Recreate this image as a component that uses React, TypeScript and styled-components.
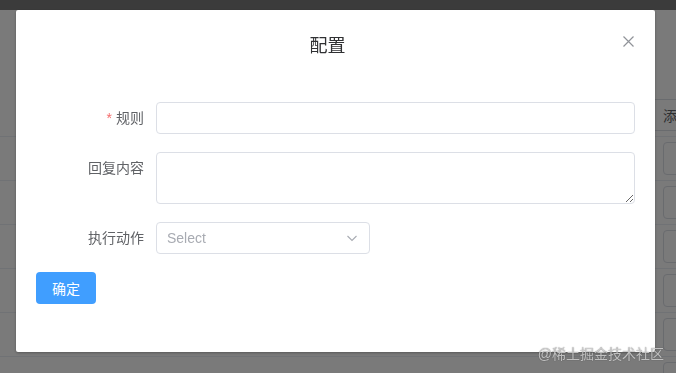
import React from 'react';
import styled, { createGlobalStyle } from 'styled-components';

const GlobalStyle = createGlobalStyle`
  html, body {
    margin: 0;
    padding: 0;
    overflow: hidden;
    background: #fff;
  }
  body {
    font-family: 'Helvetica Neue', 'Liberation Sans', 'Noto Sans CJK SC', sans-serif;
    font-size: 14px;
    color: #606266;
  }
`;

// ---- page behind the dialog ----

const Page = styled.div`
  width: 676px;
  height: 373px;
  overflow: hidden;
  display: flex;
  flex-direction: column;
  background: #fff;
`;

const TopBar = styled.div`
  height: 10px;
  background: #7c7c7c;
  flex-shrink: 0;
`;

const Toolbar = styled.div`
  height: 127px;
  flex-shrink: 0;
  display: flex;
  align-items: flex-end;
  padding-left: 650px;
  padding-bottom: 5px;
  box-sizing: border-box;
  border-bottom: 1px solid #ebeef5;
`;

const AddButton = styled.button`
  height: 32px;
  width: 80px;
  padding: 0 12px;
  border: 1px solid #dcdfe6;
  border-radius: 4px;
  background: #fff;
  color: #606266;
  font: inherit;
  text-align: left;
  flex-shrink: 0;
`;

const Row = styled.div`
  height: 44px;
  box-sizing: border-box;
  border-bottom: 1px solid #ebeef5;
  display: flex;
  align-items: center;
  padding-left: 663px;
  flex-shrink: 0;
`;

const CellInput = styled.div`
  width: 80px;
  height: 33px;
  box-sizing: border-box;
  border: 1px solid #dcdfe6;
  border-radius: 4px;
  flex-shrink: 0;
`;

// ---- dialog ----

const Overlay = styled.div`
  position: fixed;
  inset: 0;
  background: rgba(0, 0, 0, 0.52);
  padding: 10px 0 0 16px;
`;

const Dialog = styled.div`
  position: relative;
  width: 639px;
  height: 342px;
  box-sizing: border-box;
  background: #fff;
  border-radius: 2px;
  box-shadow: 0 1px 3px rgba(0, 0, 0, 0.3);
`;

const Header = styled.div`
  padding: 24px 36px 10px 20px;
`;

const Title = styled.div`
  text-align: center;
  font-size: 18px;
  line-height: 24px;
  color: #303133;
`;

const CloseButton = styled.button`
  position: absolute;
  top: 23px;
  right: 19px;
  width: 16px;
  height: 16px;
  padding: 0;
  border: none;
  background: transparent;
  display: flex;
  align-items: center;
  justify-content: center;
  color: #909399;
`;

const Body = styled.div`
  padding: 34px 20px 30px;
`;

const FormItem = styled.div`
  display: flex;
  align-items: flex-start;
  margin-bottom: 18px;
`;

const Label = styled.label`
  width: 120px;
  flex-shrink: 0;
  box-sizing: border-box;
  padding-right: 12px;
  text-align: right;
  line-height: 32px;
  font-size: 14px;
  color: #606266;
`;

const Star = styled.span`
  color: #f56c6c;
  margin-right: 4px;
`;

const TextInput = styled.input`
  flex: 1;
  height: 32px;
  box-sizing: border-box;
  border: 1px solid #dcdfe6;
  border-radius: 4px;
  padding: 0 11px;
  font: inherit;
  outline: none;
`;

const TextArea = styled.textarea`
  flex: 1;
  height: 52px;
  box-sizing: border-box;
  border: 1px solid #dcdfe6;
  border-radius: 4px;
  padding: 5px 11px;
  font: inherit;
  outline: none;
  resize: vertical;
`;

const SelectBox = styled.div`
  width: 214px;
  height: 32px;
  box-sizing: border-box;
  border: 1px solid #dcdfe6;
  border-radius: 4px;
  padding: 0 11px 0 10px;
  display: flex;
  align-items: center;
  justify-content: space-between;
  color: #a8abb2;
  font-size: 14px;
`;

const PrimaryButton = styled.button`
  width: 60px;
  height: 32px;
  border: none;
  border-radius: 4px;
  background: #409eff;
  color: #fff;
  font: inherit;
  font-size: 14px;
  padding: 0;
`;

const Watermark = styled.div`
  position: fixed;
  right: 12px;
  bottom: 11px;
  font-size: 14px;
  line-height: 16px;
  color: rgba(235, 235, 235, 0.75);
  text-shadow: 0 0 1px rgba(40, 40, 40, 0.8);
`;

export default function App() {
  return (
    <>
      <GlobalStyle />
      <Page>
        <TopBar />
        <Toolbar>
          <AddButton>添加</AddButton>
        </Toolbar>
        {[0, 1, 2, 3, 4, 5].map((i) => (
          <Row key={i}>
            <CellInput />
          </Row>
        ))}
      </Page>
      <Overlay>
        <Dialog>
          <Header>
            <Title>配置</Title>
          </Header>
          <CloseButton aria-label="close">
            <svg width="11" height="11" viewBox="0 0 11 11">
              <path d="M0.5 0.5 L10.5 10.5 M10.5 0.5 L0.5 10.5" stroke="currentColor" strokeWidth="1.2" fill="none" />
            </svg>
          </CloseButton>
          <Body>
            <FormItem>
              <Label>
                <Star>*</Star>规则
              </Label>
              <TextInput />
            </FormItem>
            <FormItem>
              <Label>回复内容</Label>
              <TextArea rows={2} />
            </FormItem>
            <FormItem>
              <Label>执行动作</Label>
              <SelectBox>
                <span>Select</span>
                <svg width="12" height="12" viewBox="0 0 12 12">
                  <path d="M1.5 4 L6 8.5 L10.5 4" stroke="currentColor" strokeWidth="1.1" fill="none" />
                </svg>
              </SelectBox>
            </FormItem>
            <PrimaryButton>确定</PrimaryButton>
          </Body>
        </Dialog>
      </Overlay>
      <Watermark>@稀土掘金技术社区</Watermark>
    </>
  );
}
